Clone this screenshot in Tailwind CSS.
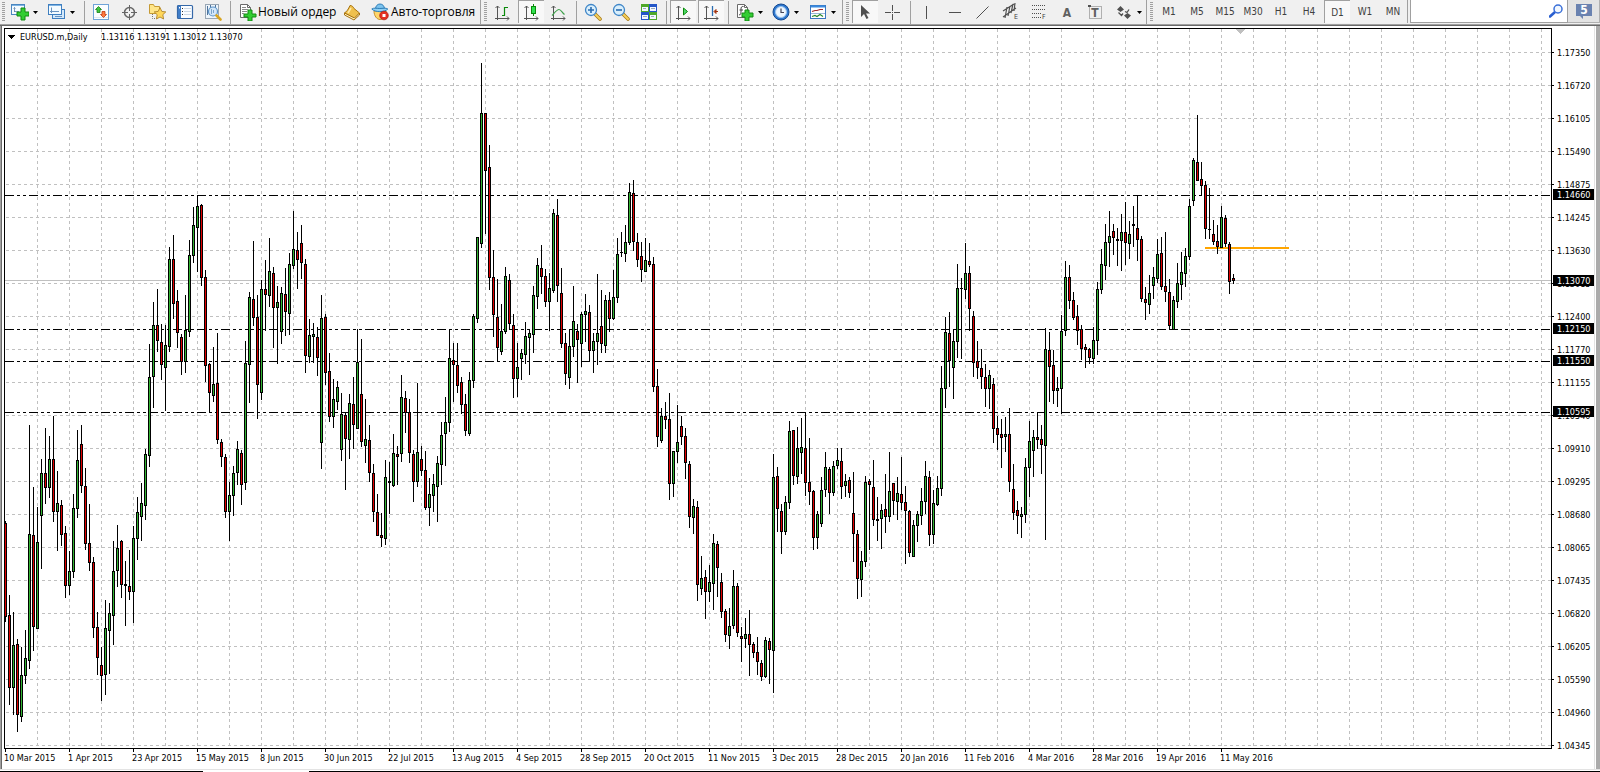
<!DOCTYPE html>
<html lang="ru">
  <head>
    <meta charset="UTF-8" />
    <meta name="viewport" content="width=device-width, initial-scale=1.0" />
    <title>EURUSD.m,Daily</title>
    <script src="https://cdn.jsdelivr.net/npm/@tailwindcss/browser@4"></script>
  </head>
  <body
    class="h-screen flex flex-col bg-white overflow-hidden font-['DejaVu_Sans_Condensed','Noto_Sans',sans-serif] text-black"
  >
    <header
      id="toolbar"
      class="flex items-stretch h-[26px] shrink-0 bg-[#f0f0f0] border-b border-[#696969] shadow-[inset_0_-1px_0_#a0a0a0] text-[#404040]"
    >
      <div class="flex w-[7px] shrink-0 pl-[2px] pt-[2px]">
        <span class="w-[3px] h-[20px] bg-[repeating-linear-gradient(#a0a0a0_0_1px,#f0f0f0_1px_2px)]"></span>
      </div>
      <button type="button" aria-label="Новый график" class="flex items-center w-[37px] pl-[4px] gap-[4px] h-[24px] shrink-0">
        <svg class="w-[18px] h-[18px]" viewBox="0 0 18 18">
          <rect x=".5" y="1.5" width="13" height="10" fill="#f4fbff" stroke="#4a86c0" />
          <path d="M1 2.5h12" stroke="#7db4e4" />
          <path d="M3.500 9V4.500m-1 1l1-1 1 1M3 8.500h5" fill="none" stroke="#5a7fa8" stroke-width=".8" />
          <path d="M10 5h4v4h4v4h-4v4h-4v-4H6V9h4z" fill="#32cd32" stroke="#128a12" />
        </svg>
        <svg class="w-[5px] h-[3px]" viewBox="0 0 5 3"><path d="M0 0h5L2.500 3z" fill="#000" /></svg>
      </button>
      <button type="button" aria-label="Профили" class="flex items-center w-[37px] pl-[4px] gap-[4px] h-[24px] shrink-0">
        <svg class="w-[18px] h-[18px]" viewBox="0 0 18 18">
          <rect x="4.500" y="6.500" width="12" height="9" fill="#d5e9fa" stroke="#3f7fc0" />
          <rect x=".5" y="1.500" width="13" height="10" fill="#f4fbff" stroke="#3f7fc0" />
          <path d="M1 2.500h12" stroke="#7db4e4" />
          <path d="M3.500 10V4.500M2 8.500h9M7 13.500h7" fill="none" stroke="#6a94c0" />
        </svg>
        <svg class="w-[5px] h-[3px]" viewBox="0 0 5 3"><path d="M0 0h5L2.500 3z" fill="#000" /></svg>
      </button>
      <span class="flex justify-center w-[6px] shrink-0 py-[1px]"><i class="w-px bg-[#a0a0a0]"></i></span>
      <button type="button" aria-label="Обзор рынка" class="flex items-center justify-center w-[28px] h-[24px] shrink-0">
        <svg class="w-[18px] h-[18px]" viewBox="0 0 18 18">
          <rect x="1.500" y="1.500" width="15" height="15" fill="#fbfdff" stroke="#6fa3d8" />
          <path d="M2 14.500h14" stroke="#dfe8f2" />
          <path d="M6.500 3.500l3 3H8v3H5v-3H3.500z" fill="#3fc83f" stroke="#1b7f1b" stroke-width=".8" />
          <path d="M11.500 14.500l3-3H13v-3h-3v3H8.500z" fill="#ff7a40" stroke="#c03a10" stroke-width=".8" />
        </svg>
      </button>
      <button type="button" aria-label="Окно данных" class="flex items-center justify-center w-[28px] h-[24px] shrink-0">
        <svg class="w-[18px] h-[18px]" viewBox="0 0 18 18">
          <circle cx="9.500" cy="9.500" r="5" fill="none" stroke="#666" stroke-width="1.500" />
          <path d="M9.500 2v6M9.500 11v6M2 9.500h6M11 9.500h6" stroke="#666" />
        </svg>
      </button>
      <button type="button" aria-label="Навигатор" class="flex items-center justify-center w-[28px] h-[24px] shrink-0">
        <svg class="w-[18px] h-[18px]" viewBox="0 0 18 18">
          <path d="M1.500 10.500v-9h4l1 2h5v7z" fill="#ffe68a" stroke="#c59a35" />
          <path d="M4.500 11v4.500h3" fill="none" stroke="#777" stroke-dasharray="1 1" />
          <path d="M12 4.500l1.800 3.900 4 .5-3 2.800.8 4.300-3.600-2-3.600 2 .8-4.300-3-2.800 4-.5z" fill="#ffd75a" stroke="#b0852a" stroke-width=".9" />
        </svg>
      </button>
      <button type="button" aria-label="Терминал" class="flex items-center justify-center w-[28px] h-[24px] shrink-0">
        <svg class="w-[18px] h-[18px]" viewBox="0 0 18 18">
          <rect x="1.500" y="2.500" width="15" height="13" rx="1" fill="#fbfdff" stroke="#3568a8" stroke-width="1.200" />
          <path d="M2 3h3v12H2z" fill="#3f7dc8" />
          <path d="M3.500 4v1.500" stroke="#fff" />
          <path d="M8 5.500h7M8 8.500h7M8 11.500h7" stroke="#ccd8e6" />
          <path d="M6 5h1v1H6zM6 8h1v1H6zM6 11h1v1H6z" fill="#333" />
        </svg>
      </button>
      <button type="button" aria-label="Тестер стратегий" class="flex items-center justify-center w-[28px] h-[24px] shrink-0">
        <svg class="w-[18px] h-[18px]" viewBox="0 0 18 18">
          <rect x="1.500" y="1.500" width="13" height="14" fill="#eef5fb" stroke="#9aa7b4" />
          <path d="M3.500 3v9M6.500 2v3M11.500 2v3" stroke="#50739a" />
          <circle cx="9" cy="8.500" r="4.500" fill="#cfe6f8" fill-opacity=".9" stroke="#5b93c8" stroke-width="1.200" />
          <path d="M7.500 6v5M9.500 7v3" stroke="#7ba4cc" />
          <path d="M12.500 12.500l4 4" stroke="#d9a520" stroke-width="2.600" stroke-linecap="round" />
        </svg>
      </button>
      <span class="flex justify-center w-[6px] shrink-0 py-[1px]"><i class="w-px bg-[#a0a0a0]"></i></span>
      <button
        type="button"
        class="flex items-center w-[105px] h-[24px] pl-[6px] gap-[1px] shrink-0 whitespace-nowrap text-black text-[12px] font-['Open_Sans','Noto_Sans',sans-serif]"
      >
        <svg class="w-[18px] h-[18px] shrink-0" viewBox="0 0 18 18">
          <path d="M1.500 1.500h7l3 3v10h-10z" fill="#fff" stroke="#6a6a6a" />
          <path d="M8.500 1.500v3h3" fill="none" stroke="#6a6a6a" />
          <path d="M3 4.500h4M3 6.500h6M3 8.500h5M3 10.500h2" stroke="#888" />
          <path d="M9 7h4v4h4v3h-4v4H9v-4H5v-3h4z" fill="#32cd32" stroke="#128a12" />
        </svg>
        <span class="pb-[1px]">Новый ордер</span>
      </button>
      <button type="button" aria-label="MetaEditor" class="flex items-center justify-center w-[28px] h-[24px] shrink-0">
        <svg class="w-[18px] h-[18px]" viewBox="0 0 18 18">
          <path d="M7 2.500c2 0 3 1 4 3l5.500 4.500-5 5.500L1.500 10c2-1 4-4 5.500-7.500z" fill="#efc04c" stroke="#a87412" />
          <path d="M1.500 10v2l9.500 5 5.500-5v-2l-5 5z" fill="#fff0c0" stroke="#a87412" />
          <path d="M8 5l-3 5" stroke="#ffe9a8" stroke-width="1.500" />
        </svg>
      </button>
      <button
        type="button"
        class="flex items-center w-[114px] h-[24px] pl-[5px] gap-[2px] shrink-0 whitespace-nowrap text-black text-[12px] font-['Open_Sans','Noto_Sans',sans-serif]"
      >
        <svg class="w-[18px] h-[18px] shrink-0" viewBox="0 0 18 18">
          <path d="M3 8c0 5 3 8.500 6 8.500s6-3.500 6-8.500z" fill="#ffd66b" stroke="#c8922a" />
          <path d="M4.500 6c0-3 2-5 4.500-5s4.500 2 4.500 5z" fill="#7cc3ee" stroke="#2f7fb8" />
          <path d="M.8 6c3 3.500 13 3.500 16 0-2-1.500-5-.5-8-.5s-6-1-8 .5z" fill="#8fd0f4" stroke="#2f7fb8" />
          <circle cx="13" cy="12.500" r="4.300" fill="#e53020" stroke="#a81a10" stroke-width=".7" />
          <rect x="11.500" y="11" width="3" height="3" fill="#fff" />
        </svg>
        <span class="pb-[1px]">Авто-торговля</span>
      </button>
      <div class="flex w-[9px] shrink-0 border-l border-[#a0a0a0] pl-[3px] pt-[2px]">
        <span class="w-[3px] h-[20px] bg-[repeating-linear-gradient(#a0a0a0_0_1px,#f0f0f0_1px_2px)]"></span>
      </div>

      <button type="button" aria-label="Бары" class="flex items-center justify-center w-[28px] h-[24px] shrink-0">
        <svg class="w-[18px] h-[18px]" viewBox="0 0 18 18">
          <path d="M3.500 17V3M1.500 5l2-2 2 2M1 15.500h14M13 13.500l2 2-2 2" fill="none" stroke="#555" />
          <path d="M10.500 4v9M11 4.500h3M8 12.500h2" fill="none" stroke="#0a8a0a" stroke-width="1.200" />
        </svg>
      </button>
      <button type="button" aria-label="Свечи" class="flex items-center justify-center w-[26px] mx-[1px] h-[23px] shrink-0 border-t border-l border-[#a0a0a0] bg-[#f8f8f8]">
        <svg class="w-[18px] h-[18px]" viewBox="0 0 18 18">
          <path d="M3.500 17V3M1.500 5l2-2 2 2M1 15.500h14M13 13.500l2 2-2 2" fill="none" stroke="#555" />
          <path d="M10.500 1v12" stroke="#0a8a0a" />
          <rect x="8.500" y="3.500" width="4" height="7" fill="#2fe04f" stroke="#0a8a0a" />
        </svg>
      </button>
      <button type="button" aria-label="Линия" class="flex items-center justify-center w-[28px] h-[24px] shrink-0">
        <svg class="w-[18px] h-[18px]" viewBox="0 0 18 18">
          <path d="M3.500 17V3M1.500 5l2-2 2 2M1 15.500h14M13 13.500l2 2-2 2" fill="none" stroke="#555" />
          <path d="M2 12.500C6 8 7 6.500 9 6.500s3 3 5.500 5" fill="none" stroke="#3da04a" stroke-width="1.200" />
        </svg>
      </button>
      <span class="flex justify-center w-[6px] shrink-0 py-[1px]"><i class="w-px bg-[#a0a0a0]"></i></span>
      <button type="button" aria-label="Увеличить" class="flex items-center justify-center w-[28px] h-[24px] shrink-0">
        <svg class="w-[18px] h-[18px]" viewBox="0 0 18 18">
          <path d="M11 11l5 5" stroke="#a87a18" stroke-width="3.600" stroke-linecap="round" />
          <path d="M11 11l5 5" stroke="#f4cf5a" stroke-width="2" stroke-linecap="round" />
          <circle cx="7" cy="7" r="5.500" fill="#d9effc" stroke="#3f86c8" stroke-width="1.300" />
          <path d="M4 7h6M7 4v6" stroke="#2a6cb0" stroke-width="1.600" />
        </svg>
      </button>
      <button type="button" aria-label="Уменьшить" class="flex items-center justify-center w-[28px] h-[24px] shrink-0">
        <svg class="w-[18px] h-[18px]" viewBox="0 0 18 18">
          <path d="M11 11l5 5" stroke="#a87a18" stroke-width="3.600" stroke-linecap="round" />
          <path d="M11 11l5 5" stroke="#f4cf5a" stroke-width="2" stroke-linecap="round" />
          <circle cx="7" cy="7" r="5.500" fill="#d9effc" stroke="#3f86c8" stroke-width="1.300" />
          <path d="M4 7h6" stroke="#2a6cb0" stroke-width="1.600" />
        </svg>
      </button>
      <button type="button" aria-label="Окна мозаикой" class="flex items-center justify-center w-[28px] h-[24px] shrink-0">
        <svg class="w-[18px] h-[18px]" viewBox="0 0 18 18">
          <path d="M1 1h8v8H1zM9 9h8v8H9z" fill="#4fa82a" />
          <path d="M9 1h8v8H9zM1 9h8v8H1z" fill="#2456c8" />
          <path d="M2 4h6v4H2zM10 4h6v4h-6zM2 12h6v4H2zM10 12h6v4h-6z" fill="#f4f8ff" />
          <path d="M3 5.500h3M11 5.500h4M3 13.500h4M11 13.500h3" stroke="#9ab" />
        </svg>
      </button>
      <span class="flex justify-center w-[6px] shrink-0 py-[1px]"><i class="w-px bg-[#a0a0a0]"></i></span>
      <button type="button" aria-label="Автопрокрутка" class="flex items-center justify-center w-[26px] mx-[1px] h-[23px] shrink-0 border-t border-l border-[#a0a0a0] bg-[#f8f8f8]">
        <svg class="w-[18px] h-[18px]" viewBox="0 0 18 18">
          <path d="M3.500 17V3M1.500 5l2-2 2 2M1 15.500h14M13 13.500l2 2-2 2" fill="none" stroke="#555" />
          <path d="M8.500 5v7l4-3.500z" fill="#4fd86a" stroke="#0a8a0a" />
        </svg>
      </button>
      <button type="button" aria-label="Сдвиг графика" class="flex items-center justify-center w-[26px] mx-[1px] h-[23px] shrink-0 border-t border-l border-[#a0a0a0] bg-[#f8f8f8]">
        <svg class="w-[18px] h-[18px]" viewBox="0 0 18 18">
          <path d="M3.500 17V3M1.500 5l2-2 2 2M1 15.500h14M13 13.500l2 2-2 2" fill="none" stroke="#555" />
          <path d="M9.500 3v10" stroke="#2a6cb0" stroke-width="1.300" />
          <path d="M15 8.500h-3M13 6.500l-2 2 2 2z" fill="#c0431a" stroke="#a03510" />
        </svg>
      </button>
      <span class="flex justify-center w-[6px] shrink-0 py-[1px]"><i class="w-px bg-[#a0a0a0]"></i></span>
      <button type="button" aria-label="Индикаторы" class="flex items-center w-[37px] pl-[5px] gap-[4px] h-[24px] shrink-0">
        <svg class="w-[18px] h-[18px]" viewBox="0 0 18 18">
          <path d="M1.500 1.500h7l3 3v10h-10z" fill="#fff" stroke="#6a6a6a" />
          <path d="M8.500 1.500v3h3" fill="none" stroke="#6a6a6a" />
          <path d="M7.500 3.500C5.500 3 5 4.500 5 6v3c0 2-.5 3-2 2.800M3.500 7h3.500" fill="none" stroke="#444" />
          <path d="M9 7h4v3h4v4h-4v4H9v-4H6v-4h3z" fill="#32cd32" stroke="#128a12" />
        </svg>
        <svg class="w-[5px] h-[3px]" viewBox="0 0 5 3"><path d="M0 0h5L2.500 3z" fill="#000" /></svg>
      </button>
      <button type="button" aria-label="Периоды" class="flex items-center w-[37px] pl-[4px] gap-[4px] h-[24px] shrink-0">
        <svg class="w-[18px] h-[18px]" viewBox="0 0 18 18">
          <circle cx="9" cy="9" r="8" fill="#2f78d0" stroke="#164a90" />
          <circle cx="9" cy="9" r="5.500" fill="#eef6ff" stroke="#9cc6f0" />
          <path d="M9 5.500V9.500h3" fill="none" stroke="#445" stroke-width="1.200" />
        </svg>
        <svg class="w-[5px] h-[3px]" viewBox="0 0 5 3"><path d="M0 0h5L2.500 3z" fill="#000" /></svg>
      </button>
      <button type="button" aria-label="Шаблоны" class="flex items-center w-[37px] pl-[4px] gap-[4px] h-[24px] shrink-0">
        <svg class="w-[18px] h-[18px]" viewBox="0 0 18 18">
          <rect x="1.500" y="2.500" width="15" height="13" fill="#fff" stroke="#3a78c0" />
          <path d="M2 3.500h14" stroke="#3a8ae0" stroke-width="2" />
          <path d="M3 8.500l3-1 2 0 3-1 3 0" fill="none" stroke="#a02a2a" stroke-width="1.200" />
          <path d="M2 10.500h14" stroke="#9ab8d8" />
          <path d="M3 13.500l3-1 2 1 3-2 3 2" fill="none" stroke="#2a8a2a" stroke-width="1.200" />
        </svg>
        <svg class="w-[5px] h-[3px]" viewBox="0 0 5 3"><path d="M0 0h5L2.500 3z" fill="#000" /></svg>
      </button>
      <div class="flex w-[9px] shrink-0 border-l border-[#a0a0a0] pl-[3px] pt-[2px]">
        <span class="w-[3px] h-[20px] bg-[repeating-linear-gradient(#a0a0a0_0_1px,#f0f0f0_1px_2px)]"></span>
      </div>

      <button type="button" aria-label="Курсор" class="flex items-center justify-center w-[26px] mx-[1px] h-[23px] shrink-0 border-t border-l border-[#a0a0a0] bg-[#f8f8f8]">
        <svg class="w-[18px] h-[18px]" viewBox="0 0 18 18">
          <path d="M4 2v12l3-3 2.500 5 2-1-2.500-4.500h4z" fill="#505050" />
        </svg>
      </button>
      <button type="button" aria-label="Перекрестие" class="flex items-center justify-center w-[28px] h-[24px] shrink-0">
        <svg class="w-[18px] h-[18px]" viewBox="0 0 18 18">
          <path d="M8.500 2v6M8.500 11v6M1 9.500h6M10 9.500h6M8 9.500h1" stroke="#505050" />
        </svg>
      </button>
      <span class="flex justify-center w-[6px] shrink-0 py-[1px]"><i class="w-px bg-[#a0a0a0]"></i></span>
      <button type="button" aria-label="Вертикальная линия" class="flex items-center justify-center w-[28px] h-[24px] shrink-0">
        <svg class="w-[18px] h-[18px]" viewBox="0 0 18 18"><path d="M8.500 3v13" stroke="#505050" /></svg>
      </button>
      <button type="button" aria-label="Горизонтальная линия" class="flex items-center justify-center w-[28px] h-[24px] shrink-0">
        <svg class="w-[18px] h-[18px]" viewBox="0 0 18 18"><path d="M3 9.500h12" stroke="#505050" /></svg>
      </button>
      <button type="button" aria-label="Трендовая линия" class="flex items-center justify-center w-[28px] h-[24px] shrink-0">
        <svg class="w-[18px] h-[18px]" viewBox="0 0 18 18"><path d="M2.500 15.500l12-12" stroke="#505050" /></svg>
      </button>
      <button type="button" aria-label="Канал" class="flex items-center justify-center w-[28px] h-[24px] shrink-0">
        <svg class="w-[18px] h-[18px]" viewBox="0 0 18 18">
          <path d="M1 8L12 1M1 14L14 5M3 15L5 4M6 13L8 3M9 10l2-9M12 8l1-8" stroke="#505050" stroke-width="1.200" />
          <text x="12" y="16" font-size="7" fill="#404040">E</text>
        </svg>
      </button>
      <button type="button" aria-label="Фибоначчи" class="flex items-center justify-center w-[28px] h-[24px] shrink-0">
        <svg class="w-[18px] h-[18px]" viewBox="0 0 18 18">
          <path d="M2 2.500h14M2 6.500h14M2 10.500h9M2 14.500h9" stroke="#505050" stroke-dasharray="1 1" />
          <text x="12" y="16" font-size="7" fill="#404040">F</text>
        </svg>
      </button>
      <button type="button" class="w-[28px] h-[24px] shrink-0 pt-[1px] text-[12px] leading-[22px] font-bold text-[#606060]">A</button>
      <button type="button" aria-label="Метка" class="flex items-center justify-center w-[28px] h-[24px] shrink-0">
        <svg class="w-[18px] h-[18px]" viewBox="0 0 18 18">
          <rect x="3.500" y="3.500" width="12" height="12" fill="none" stroke="#707070" stroke-dasharray="1 1" />
          <path d="M2 2h3v2H2z" fill="#505050" />
          <text x="9" y="14" font-size="12" font-weight="bold" text-anchor="middle" fill="#606060">T</text>
        </svg>
      </button>
      <button type="button" aria-label="Стрелки" class="flex items-center w-[37px] pl-[6px] gap-[4px] h-[24px] shrink-0">
        <svg class="w-[18px] h-[18px]" viewBox="0 0 18 18">
          <path d="M5.500 3l3.500 3.500-3.500 2.500L2 6.500zM12.500 10l3.500 2.500-3.500 3.500L9 12.500z" fill="#505050" />
          <path d="M3.500 9.500l3 3 1.500-2M10 8.500l2 1 2-3" fill="none" stroke="#505050" stroke-width="1.300" />
        </svg>
        <svg class="w-[5px] h-[3px]" viewBox="0 0 5 3"><path d="M0 0h5L2.500 3z" fill="#000" /></svg>
      </button>
      <div class="flex w-[9px] shrink-0 border-l border-[#a0a0a0] pl-[3px] pt-[2px]">
        <span class="w-[3px] h-[20px] bg-[repeating-linear-gradient(#a0a0a0_0_1px,#f0f0f0_1px_2px)]"></span>
      </div>

      <div class="flex shrink-0 text-[10px] leading-[24px]">
        <button type="button" class="w-[28px] h-[24px]">M1</button>
        <button type="button" class="w-[28px] h-[24px]">M5</button>
        <button type="button" class="w-[28px] h-[24px]">M15</button>
        <button type="button" class="w-[28px] h-[24px]">M30</button>
        <button type="button" class="w-[28px] h-[24px]">H1</button>
        <button type="button" class="w-[28px] h-[24px]">H4</button>
        <button type="button" class="w-[26px] mx-[1px] h-[23px] border-t border-l border-[#a0a0a0] bg-[#f8f8f8]">D1</button>
        <button type="button" class="w-[28px] h-[24px]">W1</button>
        <button type="button" class="w-[28px] h-[24px]">MN</button>
      </div>
      <label class="flex items-start flex-1 h-[23px] border-l border-[#a0a0a0] pl-[2px]">
        <span class="flex items-center flex-1 h-[23px] pr-[4px] bg-white border-b border-l border-r border-[#a0a0a0]">
          <input type="text" aria-label="Поиск" class="flex-1 min-w-0 h-[20px] text-[11px] outline-none" />
          <svg class="w-[14px] h-[14px]" viewBox="0 0 14 14">
            <path d="M6 8l-5 4.500" stroke="#2a5fd0" stroke-width="2.600" stroke-linecap="round" />
            <circle cx="9" cy="5" r="4" fill="#f2f8ff" stroke="#3a6fd8" stroke-width="1.500" />
          </svg>
        </span>
      </label>
      <button type="button" aria-label="Сообщения" class="flex items-center justify-center w-[32px] h-[23px] shrink-0 bg-[#e3e3e3] border-b border-r border-[#b0b0b0]">
        <svg class="w-[18px] h-[18px]" viewBox="0 0 18 18">
          <path d="M1 2h16v12H8v3l-3-3H1z" fill="#6a82b0" />
          <text x="9" y="12" font-size="12" font-weight="bold" text-anchor="middle" fill="#fff">5</text>
        </svg>
      </button>
    </header>

    <main class="flex flex-1 min-h-0">
      <div class="w-[2px] shrink-0 bg-[#696969] border-l border-[#a0a0a0]"></div>
      <svg id="chart" class="flex-1 min-w-0 h-full text-[9px]" shape-rendering="crispEdges"></svg>
      <div class="w-[4px] shrink-0 bg-[#ababab]"></div>
    </main>
    <footer class="flex items-end h-[3px] shrink-0 border-t border-[#e3e3e3]">
      <span class="w-[203px] h-px bg-black"></span>
      <span class="w-[106px] h-px"></span>
      <span class="flex-1 h-px bg-black"></span>
    </footer>

    <script>
      // one bar per item: high, body top, body bottom, low, side (g up, r down, k flat)
      const bars = `
521 523 616 621 r,595 615 687 704 r,612 645 687 714 g,639 644 714 731 r,647 675 716 721 g,630 658 675 683 g,
425 534 660 668 g,487 535 626 650 r,507 542 628 628 g,459 473 515 568 g,428 473 487 503 r,436 459 487 497 g,
416 459 511 521 r,471 503 511 550 g,500 505 534 545 r,526 533 585 597 r,551 571 585 594 g,494 508 571 577 g,
430 460 508 517 g,425 444 485 492 r,468 486 543 549 r,504 543 562 570 r,557 562 627 637 r,612 627 657 674 r,
647 665 675 700 r,600 628 674 694 g,603 613 630 673 g,541 571 615 644 g,525 548 570 586 g,540 541 584 597 r,
561 584 585 625 k,550 586 591 599 r,526 538 591 622 g,497 512 538 559 g,483 503 516 540 g,449 454 505 519 g,
344 377 455 466 g,302 325 376 407 g,289 325 340 351 r,324 342 364 379 r,325 345 367 410 g,247 259 346 351 g,
235 259 303 318 r,290 301 332 347 r,334 337 361 374 r,295 330 361 372 g,240 255 331 336 g,207 225 255 262 g,
195 206 227 271 g,204 205 277 285 r,270 277 365 381 r,363 364 392 412 r,347 384 395 401 g,333 383 439 443 r,
439 442 456 466 r,454 457 511 517 r,482 495 511 540 g,466 473 495 515 g,441 449 472 484 g,450 453 484 504 r,
341 363 482 489 g,292 297 364 402 g,241 299 317 325 r,295 317 384 418 r,280 289 392 399 g,260 289 294 330 r,
238 271 295 306 g,267 273 307 347 r,286 302 307 363 g,287 293 331 343 g,268 294 311 335 r,253 264 313 334 g,
211 249 265 268 g,232 250 259 288 r,225 243 262 278 r,259 264 355 372 r,319 335 356 362 g,323 334 336 362 g,
327 337 357 375 r,295 318 442 468 g,314 317 372 384 r,353 371 416 421 r,379 399 416 427 g,381 387 401 409 g,
393 414 449 460 g,413 415 438 489 r,394 403 439 458 g,377 404 424 448 r,329 362 428 428 g,339 394 441 446 r,
399 439 445 462 g,425 440 472 481 r,464 473 511 521 r,494 512 535 535 r,513 535 537 546 r,460 477 538 544 g,
462 481 482 513 k,434 453 485 486 g,446 454 456 484 r,375 397 453 461 g,391 398 412 432 r,399 412 452 462 r,
450 454 481 501 r,383 452 481 486 g,446 459 470 475 r,451 470 507 509 r,478 494 507 525 g,474 484 495 511 g,
456 463 486 521 g,422 435 464 484 g,397 422 433 465 g,329 358 422 431 g,343 360 364 401 r,343 365 385 392 r,
377 382 404 413 r,394 404 430 435 r,372 380 433 435 g,314 316 380 387 g,237 237 318 322 g,63 113 243 247 g,
113 113 170 233 r,145 167 277 289 r,250 277 314 336 r,279 317 347 361 r,304 331 351 354 g,267 276 331 333 g,
274 280 323 329 r,314 325 378 397 r,343 367 378 396 g,349 353 358 379 g,322 336 354 363 g,330 333 337 374 g,
286 295 334 352 g,258 265 296 308 g,245 268 276 293 r,269 276 301 306 r,273 288 301 330 g,209 213 290 292 g,
199 215 285 301 r,268 293 343 347 r,333 343 373 384 r,329 346 377 388 g,286 321 346 356 g,324 331 339 382 r,
312 314 343 366 g,294 311 314 341 g,305 312 350 361 r,333 341 350 372 g,274 333 341 364 g,290 326 343 352 r,
295 300 345 352 g,292 300 318 331 r,270 297 318 319 g,238 254 297 302 g,232 252 252 256 k,225 242 253 261 g,
183 192 242 244 g,180 193 241 250 r,233 242 259 266 r,242 256 269 281 r,238 260 271 271 g,243 261 264 266 r,
257 264 386 391 r,369 386 436 446 r,408 416 440 442 g,402 416 419 428 r,393 419 483 499 r,451 451 483 496 g,
405 442 451 462 g,416 426 436 444 r,428 436 462 478 r,461 464 516 527 r,499 506 517 533 g,501 507 584 600 r,
556 578 588 594 g,570 577 591 618 r,565 582 591 601 g,534 543 583 609 g,541 544 567 596 r,573 582 611 617 r,
609 611 634 641 r,608 626 635 648 g,570 586 625 628 g,583 586 632 636 r,627 636 638 661 r,618 634 638 647 g,
610 634 644 675 r,642 644 652 657 r,637 652 661 674 r,660 663 676 680 r,637 640 676 677 g,638 641 649 683 r,
454 477 650 692 g,467 476 508 531 r,504 511 531 553 r,496 502 531 534 g,421 431 502 508 g,430 430 475 484 r,
427 448 476 483 g,418 447 452 473 g,413 448 482 495 r,438 482 491 504 r,490 491 537 549 r,511 514 537 548 g,
477 490 523 526 g,452 467 489 496 g,467 469 492 513 r,461 466 492 495 g,448 460 465 468 g,448 461 486 498 r,
474 481 485 496 g,477 480 492 497 r,472 513 533 561 r,530 534 578 598 r,551 561 579 596 g,476 482 561 566 g,
479 481 484 549 r,460 487 519 525 r,497 519 520 540 k,504 510 518 548 g,474 509 516 532 r,452 491 516 521 g,
483 483 500 514 r,477 493 501 519 g,457 494 502 509 r,486 502 510 563 r,510 511 552 556 r,520 525 556 556 g,
511 514 525 541 g,488 501 515 524 g,461 476 501 513 g,471 477 534 545 r,490 503 534 543 g,476 488 504 505 g,
366 388 488 495 g,317 332 388 407 g,312 333 360 386 r,329 341 367 398 g,264 288 341 357 g,278 288 288 358 k,
243 273 289 298 g,266 273 308 330 r,311 316 362 376 r,341 361 367 378 r,349 368 376 388 r,364 377 388 406 r,
370 375 388 408 g,378 384 428 442 r,416 428 434 449 r,419 434 437 467 r,417 434 436 451 g,408 434 481 491 r,
464 489 512 519 r,501 510 515 533 r,507 514 516 537 g,458 467 514 522 g,421 441 467 496 g,430 437 450 476 g,
412 437 439 448 r,425 439 444 473 r,328 349 445 539 g,332 350 366 401 r,350 365 390 403 r,377 388 390 406 g,
315 331 388 413 g,261 277 330 335 g,265 277 300 308 r,292 300 317 319 r,305 316 330 344 r,325 329 348 359 r,
344 347 349 367 r,348 349 357 363 r,327 340 358 363 g,282 289 340 354 g,249 264 289 293 g,224 242 265 279 g,
211 236 242 266 g,224 231 237 254 r,228 239 240 265 k,214 232 240 270 g,202 232 242 264 r,221 234 243 258 g,
206 224 225 246 k,195 228 239 260 r,236 239 298 301 r,287 299 302 319 r,275 293 304 313 g,267 277 285 298 g,
239 254 278 282 g,237 253 286 289 r,232 286 291 301 r,279 292 325 329 r,296 300 329 329 g,263 283 301 307 g,
252 272 284 299 g,248 256 273 286 g,199 206 256 259 g,158 160 200 205 g,115 162 180 180 r,162 179 185 195 r,
181 185 228 238 r,188 229 229 238 k,220 234 241 244 r,225 241 246 253 r,206 217 247 247 g,215 218 243 246 r,
242 244 281 293 r,274 278 280 283 r`;

      const prices = [
        "1.17350", "1.16720", "1.16105", "1.15490", "1.14875", "1.14245",
        "1.13630", "1.13015", "1.12400", "1.11770", "1.11155", "1.10540",
        "1.09910", "1.09295", "1.08680", "1.08065", "1.07435", "1.06820",
        "1.06205", "1.05590", "1.04960", "1.04345",
      ];

      const dates = [
        "10 Mar 2015", "1 Apr 2015", "23 Apr 2015", "15 May 2015",
        "8 Jun 2015", "30 Jun 2015", "22 Jul 2015", "13 Aug 2015",
        "4 Sep 2015", "28 Sep 2015", "20 Oct 2015", "11 Nov 2015",
        "3 Dec 2015", "28 Dec 2015", "20 Jan 2016", "11 Feb 2016",
        "4 Mar 2016", "28 Mar 2016", "19 Apr 2016", "11 May 2016",
      ];

      const levels = [
        [195, "1.14660"],
        [329, "1.12150"],
        [361, "1.11550"],
        [412, "1.10595"],
      ];

      const chart = document.querySelector("#chart");
      const fills = { g: "#32b432", r: "#e00000", k: "#000" };

      // the bars are stored in window coordinates, the chart starts below the toolbar
      const offsetX = 2;
      const offsetY = 26;
      const left = 4;
      const top_ = 28;

      function rect(x, y, w, h, fill) {
        return `<rect x="${x}" y="${y}" width="${w}" height="${h}" fill="${fill}"/>`;
      }

      function line(x1, y1, x2, y2, color, dash) {
        return `<path d="M${x1} ${y1}L${x2} ${y2}" stroke="${color}" stroke-dasharray="${dash}"/>`;
      }

      function label(x, y, text, fill) {
        return `<text x="${x}" y="${y}" fill="${fill}">${text}</text>`;
      }

      function tag(right, y, text) {
        return rect(right + 2, y - 6, 41, 11, "#000") + label(right + 6, y + 3, text, "#fff");
      }

      function draw() {
        const right = chart.clientWidth + offsetX - 45;
        const bottom = chart.clientHeight + offsetY - 21;
        let out = "";

        for (let x = 37; x < right; x += 32) {
          out += line(x + 0.5, top_ + 1, x + 0.5, bottom, "#c0c0c0", "3 3");
        }
        prices.forEach((price, i) => {
          const y = 52 + i * 33;
          out += line(left + 2, y + 0.5, right, y + 0.5, "#c0c0c0", "3 3");
          out += rect(right, y, 3, 1, "#000");
          out += label(right + 6, y + 4, price, "#000");
        });

        out += rect(left, 280, right - left, 1, "#c0c0c0");
        levels.forEach(([y]) => {
          out += line(5, y + 0.5, right, y + 0.5, "#000", "9 3 3 3 3 3");
        });
        out += rect(1205, 247, 84, 2, "#ffa500");

        bars.trim().split(",").forEach((bar, i) => {
          const [high, a, b, low, side] = bar.trim().split(" ");
          const x = 5 + i * 4;
          out += rect(x, high, 1, low - high + 1, "#000");
          out += rect(x - 1, a, 3, b - a + 1, "#000");
          if (side !== "k") {
            out += rect(x, +a + 1, 1, b - a - 1, fills[side]);
          }
        });

        out += `<path d="M1236 29h9l-4.500 5z" fill="#c0c0c0"/>`;
        out += `<rect x="${left + 0.5}" y="${top_ + 0.5}" width="${right - left}" height="${bottom - top_}" fill="none" stroke="#000"/>`;

        dates.forEach((date, i) => {
          out += rect(5 + i * 64, bottom, 1, 4, "#000");
          out += label(4 + i * 64, bottom + 13, date, "#000");
        });

        levels.forEach(([y, price]) => (out += tag(right, y, price)));
        out += tag(right, 281, "1.13070");

        out += `<path d="M8 35h7l-3.500 4z" fill="#000"/>`;
        out += label(20, 40, "EURUSD.m,Daily", "#000");
        out += label(101, 40, "1.13116 1.13191 1.13012 1.13070", "#000");

        out += rect(right + 43, top_ - 2, 1, bottom, "#e3e3e3");
        chart.innerHTML = `<g transform="translate(${-offsetX} ${-offsetY})">${out}</g>`;
      }

      new ResizeObserver(draw).observe(chart);
    </script>
  </body>
</html>
